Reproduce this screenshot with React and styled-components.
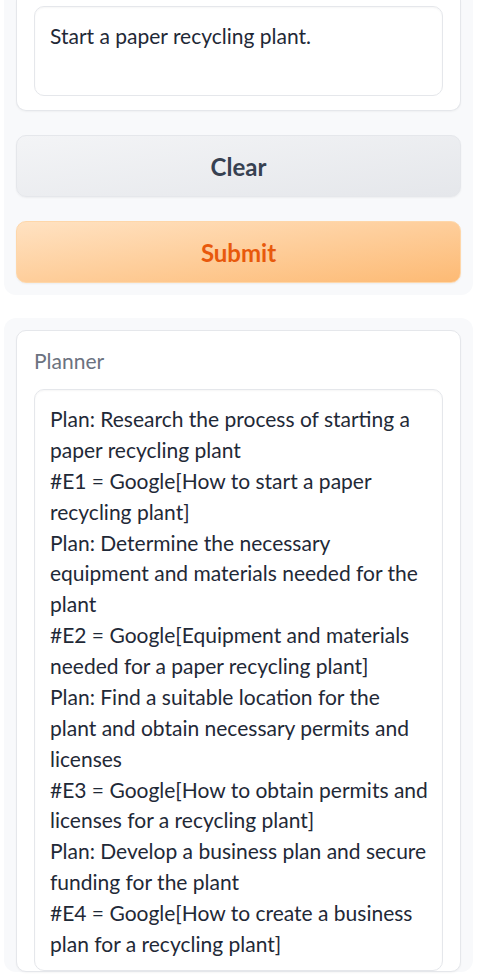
import React from "react";
import styled, { createGlobalStyle } from "styled-components";

const plannerLines = [
  "Plan: Research the process of starting a",
  "paper recycling plant",
  "#E1 = Google[How to start a paper",
  "recycling plant]",
  "Plan: Determine the necessary",
  "equipment and materials needed for the",
  "plant",
  "#E2 = Google[Equipment and materials",
  "needed for a paper recycling plant]",
  "Plan: Find a suitable location for the",
  "plant and obtain necessary permits and",
  "licenses",
  "#E3 = Google[How to obtain permits and",
  "licenses for a recycling plant]",
  "Plan: Develop a business plan and secure",
  "funding for the plant",
  "#E4 = Google[How to create a business",
  "plan for a recycling plant]",
];

function App() {
  return (
    <>
      <GlobalStyle />
      <Page>
        <Panel cut>
          <Card cut>
            <TextBox>
              <Line>Start a paper recycling plant.</Line>
            </TextBox>
          </Card>
          <Button>Clear</Button>
          <Button primary>Submit</Button>
        </Panel>
        <Panel>
          <Card>
            <Label>Planner</Label>
            <TextBox tall>
              {plannerLines.map((line, i) => (
                <Line key={i}>{line}</Line>
              ))}
            </TextBox>
          </Card>
        </Panel>
      </Page>
    </>
  );
}

export default App;

const GlobalStyle = createGlobalStyle`
  html, body {
    margin: 0;
    padding: 0;
    background: #ffffff;
    overflow: hidden;
  }
  body {
    font-family: Lato, "Open Sans", sans-serif;
    color: #1f2937;
  }
`;

const Page = styled.div`
  height: 975px;
  padding: 0 7px 0 4px;
  display: flex;
  flex-direction: column;
  gap: 23px;
  overflow: hidden;
`;

const Panel = styled.div`
  background: #f8f9fb;
  border-radius: ${(p) => (p.cut ? "0 0 12px 12px" : "12px")};
  padding: ${(p) => (p.cut ? "0 12px 12px" : "12px 12px 0")};
  display: flex;
  flex-direction: column;
  gap: 24px;
`;

const Card = styled.div`
  background: #ffffff;
  border: 1px solid #e5e7eb;
  border-top: ${(p) => (p.cut ? "none" : "1px solid #e5e7eb")};
  border-radius: ${(p) => (p.cut ? "0 0 10px 10px" : "10px")};
  padding: ${(p) => (p.cut ? "6px 17px 14px" : "16px 17px 0")};
  box-shadow: 0 1px 2px rgba(0, 0, 0, 0.04);
`;

const Label = styled.div`
  font-size: 21px;
  line-height: 28px;
  color: #6b7280;
  margin-bottom: 14px;
`;

const TextBox = styled.div`
  border: 1px solid #e5e7eb;
  border-radius: 10px;
  background: #ffffff;
  box-shadow: inset 0 1px 2px rgba(0, 0, 0, 0.04);
  padding: 14px 15px 0;
  height: ${(p) => (p.tall ? "582px" : "90px")};
  box-sizing: border-box;
  font-size: 21px;
  line-height: 30.88px;
  color: #1f2937;
`;

const Line = styled.div`
  white-space: nowrap;
`;

const Button = styled.div`
  height: 62px;
  border-radius: 10px;
  display: flex;
  align-items: center;
  justify-content: center;
  font-size: 24px;
  font-weight: 700;
  box-sizing: border-box;
  border: 1px solid ${(p) => (p.primary ? "#fed7aa" : "#e5e7eb")};
  color: ${(p) => (p.primary ? "#e8590c" : "#374151")};
  background: ${(p) =>
    p.primary
      ? "linear-gradient(to bottom right, #ffe2c2, #fdba74)"
      : "linear-gradient(to bottom right, #f3f4f6, #e5e7eb)"};
  box-shadow: 0 1px 2px rgba(0, 0, 0, 0.05);
`;
